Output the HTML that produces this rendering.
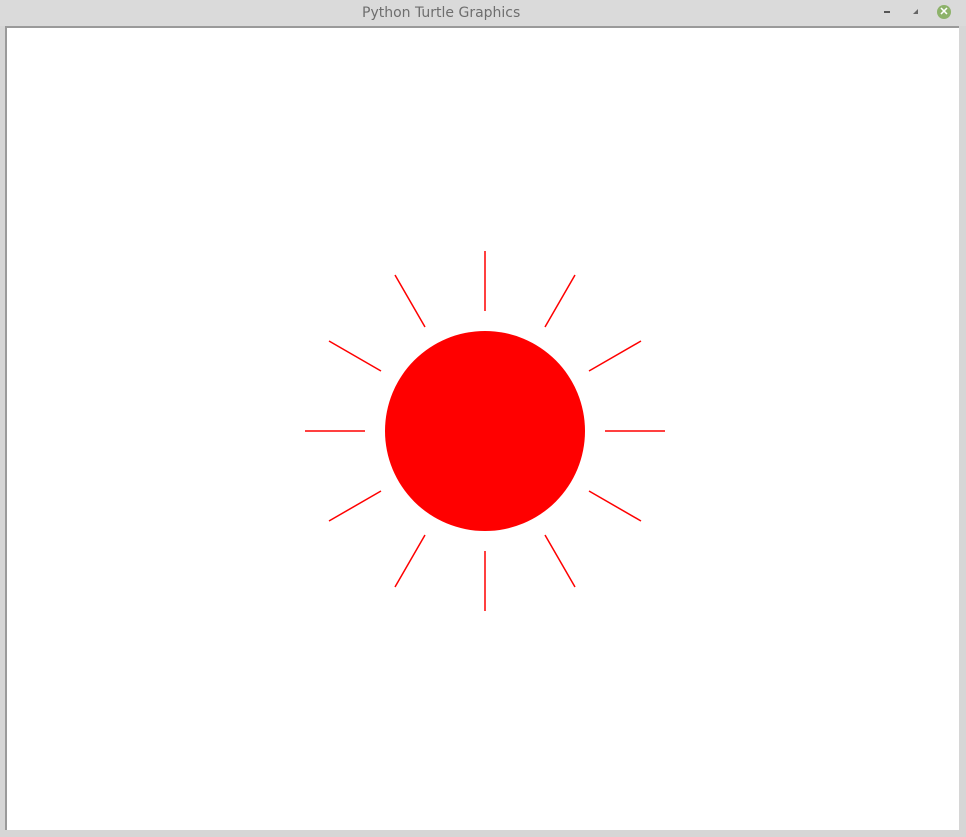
<!DOCTYPE html><html><head><style>
body{margin:0;width:966px;height:837px;background:#d6d6d6;position:relative;overflow:hidden;font-family:"Liberation Sans",sans-serif}
#t{position:absolute;top:0;left:0;width:966px;height:26px;background:#dadada}
#tt{position:absolute;left:362px;top:0;line-height:26px;font-size:14px;color:#6e6e6e;font-family:"DejaVu Sans",sans-serif;white-space:nowrap}
#c{position:absolute;left:5px;top:26px;width:954px;height:804px;background:#fff;border-left:2px solid #9a9a9a;border-top:2px solid #9a9a9a;box-sizing:border-box}
</style></head><body>
<div id="t"></div><div id="tt">Python Turtle Graphics</div>
<div style="position:absolute;left:884px;top:11px;width:6px;height:2px;background:#555"></div>
<div style="position:absolute;left:913px;top:9px;width:5px;height:5px;background:#666;clip-path:polygon(0 100%,100% 0,100% 100%)"></div>
<div style="position:absolute;left:937px;top:5px;width:14px;height:14px;border-radius:50%;background:#8db26a;color:#fff;font-size:11px;line-height:14px;text-align:center;font-weight:bold">✕</div>
<div id="c"></div>
<svg style="position:absolute;left:0;top:0" width="966" height="837">
<circle cx="485" cy="431" r="100" fill="#f00"/>
<g stroke="#f00" stroke-width="1.5">
<line x1="485" y1="311" x2="485" y2="251"/><line x1="485" y1="551" x2="485" y2="611"/>
<line x1="365" y1="431" x2="305" y2="431"/><line x1="605" y1="431" x2="665" y2="431"/>
<line x1="545" y1="327" x2="575" y2="275"/><line x1="425" y1="327" x2="395" y2="275"/>
<line x1="545" y1="535" x2="575" y2="587"/><line x1="425" y1="535" x2="395" y2="587"/>
<line x1="589" y1="371" x2="641" y2="341"/><line x1="381" y1="371" x2="329" y2="341"/>
<line x1="589" y1="491" x2="641" y2="521"/><line x1="381" y1="491" x2="329" y2="521"/>
</g></svg>
</body></html>
